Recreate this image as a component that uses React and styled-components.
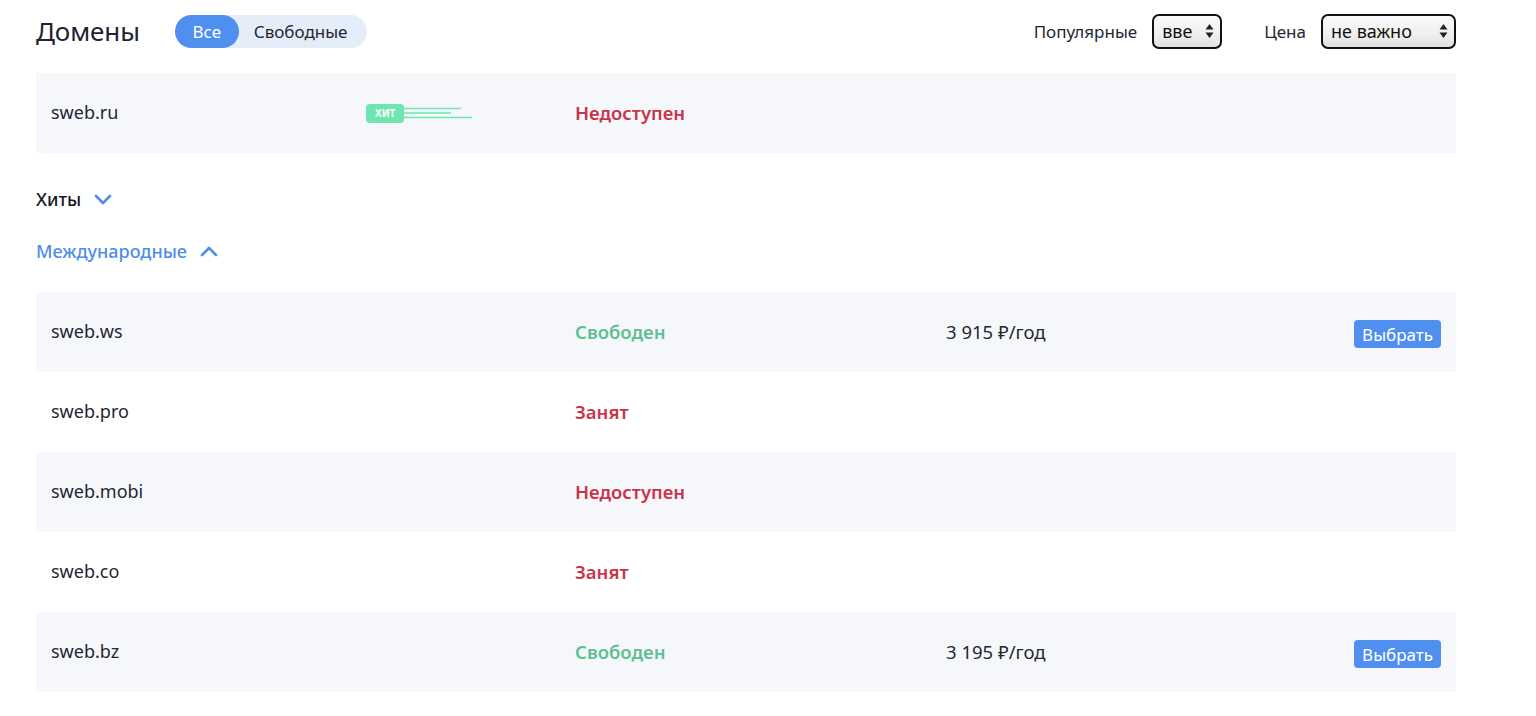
import styled, { createGlobalStyle } from "styled-components";

const Global = createGlobalStyle`
  body {
    margin: 0;
    background: #fff;
    font-family: 'Noto Sans', 'Open Sans', sans-serif;
    color: #1f2430;
  }
`;

const Page = styled.div`
  width: 1420px;
  padding: 14px 0 0 36px;
`;

const Header = styled.header`
  display: flex;
  align-items: center;
  height: 34px;
  margin-bottom: 25px;
`;

const Title = styled.h1`
  margin: 0 35px 0 0;
  font-size: 26px;
  font-weight: 400;
  letter-spacing: -0.1px;
`;

const Toggle = styled.div`
  display: flex;
  background: #e5edf9;
  border-radius: 17px;
  height: 33px;
  width: 192px;
`;

const ToggleItem = styled.button`
  border: 0;
  border-radius: 17px;
  padding: 0 ${p => (p.$active ? "16px" : "15px")};
  font: inherit;
  font-size: 17px;
  background: ${p => (p.$active ? "#4f8ff0" : "transparent")};
  color: ${p => (p.$active ? "#fff" : "#222733")};
  width: ${p => (p.$active ? "64px" : "auto")};
`;

const Filters = styled.div`
  margin-left: auto;
  display: flex;
  align-items: center;
`;

const FilterLabel = styled.span`
  font-size: 17px;
  color: #222733;
  margin-right: 15px;
`;

const Select = styled.div`
  position: relative;
  box-sizing: border-box;
  width: ${p => p.$w}px;
  height: 35px;
  border: 2px solid #111;
  border-radius: 7px;
  background: linear-gradient(#fafafa, #f0f0f0 55%, #e2e2e2);
  font-size: 18px;
  color: #111;
  display: flex;
  align-items: center;
  padding-left: 8px;
  margin-right: ${p => p.$mr || 0}px;
`;

const Arrows = styled.svg`
  position: absolute;
  right: 6px;
  top: 50%;
  transform: translateY(-50%);
`;

const Row = styled.div`
  display: grid;
  grid-template-columns: 315px 209px 371px 1fr auto;
  align-items: center;
  height: 80px;
  padding: 0 15px;
  background: ${p => (p.$shade ? "#f6f7fb" : "#fff")};
`;

const Domain = styled.span`
  font-size: 18px;
  color: #222733;
  margin-top: -2px;
`;

const Status = styled.span`
  font-size: 18.5px;
  font-weight: 600;
  margin-top: -2px;
  color: ${p => (p.$free ? "#5dbf93" : "#c8344a")};
`;

const Price = styled.span`
  font-size: 18.5px;
  color: #222733;
  margin-top: -2px;
`;

const Pick = styled.button`
  border: 0;
  border-radius: 4px;
  background: #4f8ff0;
  color: #fff;
  font: inherit;
  font-size: 17px;
  height: 28px;
  padding: 0 8px;
  margin-top: 4px;
`;

const Hit = styled.div`
  display: flex;
  align-items: center;
`;

const HitBadge = styled.span`
  background: #6fe6b2;
  color: #fff;
  font-size: 10px;
  font-weight: 700;
  border-radius: 4px;
  padding: 3px 9px;
  line-height: 13px;
`;

const Group = styled.div`
  display: flex;
  align-items: center;
  gap: 12px;
  height: 52px;
  font-size: 18px;
  color: ${p => (p.$open ? "#4f8ee8" : "#15181f")};
  font-weight: 500;
`;

const Groups = styled.div`
  margin: 20px 0 15px;
`;

const Chevron = ({ up }) => (
  <svg width="20" height="12" viewBox="0 0 20 12">
    <path
      d={up ? "M3 10 L10 3 L17 10" : "M3 3 L10 10 L17 3"}
      fill="none"
      stroke="#4f8ee8"
      strokeWidth="2.6"
      strokeLinecap="round"
      strokeLinejoin="round"
    />
  </svg>
);

const rows = [
  { name: "sweb.ws", free: true, price: "3 915 ₽/год" },
  { name: "sweb.pro", status: "Занят" },
  { name: "sweb.mobi", status: "Недоступен" },
  { name: "sweb.co", status: "Занят" },
  { name: "sweb.bz", free: true, price: "3 195 ₽/год" },
];

function SelectBox({ value, w, mr }) {
  return (
    <Select $w={w} $mr={mr}>
      {value}
      <Arrows width="9" height="16" viewBox="0 0 9 16">
        <path d="M4.5 1 L8.5 6.5 H0.5 Z M4.5 15 L8.5 9.5 H0.5 Z" fill="#222" />
      </Arrows>
    </Select>
  );
}

export default function App() {
  return (
    <Page>
      <Global />
      <Header>
        <Title>Домены</Title>
        <Toggle>
          <ToggleItem $active>Все</ToggleItem>
          <ToggleItem>Свободные</ToggleItem>
        </Toggle>
        <Filters>
          <FilterLabel>Популярные</FilterLabel>
          <SelectBox value="вве" w={70} mr={42} />
          <FilterLabel>Цена</FilterLabel>
          <SelectBox value="не важно" w={135} />
        </Filters>
      </Header>

      <Row $shade>
        <Domain>sweb.ru</Domain>
        <Hit>
          <HitBadge>ХИТ</HitBadge>
          <svg width="70" height="12" viewBox="0 0 70 12">
            <path d="M0 1.5 H57 M0 6 H47 M0 10.5 H68" stroke="#6fe6b2" strokeWidth="1.6" />
          </svg>
        </Hit>
        <Status>Недоступен</Status>
      </Row>

      <Groups>
        <Group>
          Хиты <Chevron />
        </Group>
        <Group $open>
          Международные <Chevron up />
        </Group>
      </Groups>

      {rows.map((r, i) => (
        <Row key={r.name} $shade={i % 2 === 0}>
          <Domain>{r.name}</Domain>
          <span />
          <Status $free={r.free}>{r.free ? "Свободен" : r.status}</Status>
          <Price>{r.price}</Price>
          {r.free ? <Pick>Выбрать</Pick> : <span />}
        </Row>
      ))}
    </Page>
  );
}
